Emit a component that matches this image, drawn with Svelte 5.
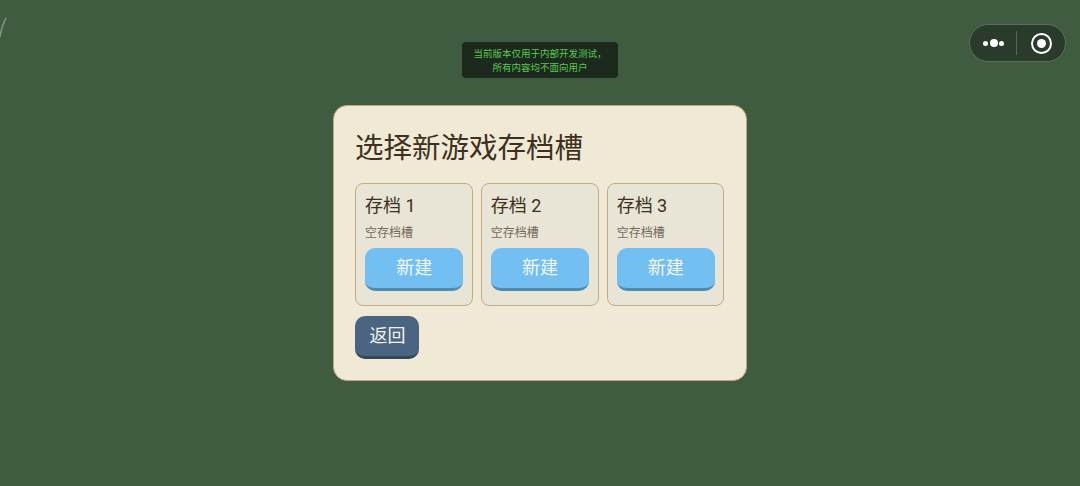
<script>
  const slots = [1, 2, 3];
</script>

<main class="page">
  <svg class="scratch" width="8" height="24" viewBox="0 0 8 24"><path d="M6 1 C4 5 1 10 0 20" /></svg>

  <div class="notice">
    当前版本仅用于内部开发测试，<br />所有内容均不面向用户
  </div>

  <div class="capsule">
    <button class="more" aria-label="更多">
      <i class="dot small"></i><i class="dot"></i><i class="dot small"></i>
    </button>
    <span class="divider"></span>
    <button class="close" aria-label="关闭"><i class="ring"></i></button>
  </div>

  <section class="panel">
    <h1>选择新游戏存档槽</h1>
    <div class="slots">
      {#each slots as n}
        <div class="slot">
          <h2>存档 {n}</h2>
          <p>空存档槽</p>
          <button class="create">新建</button>
        </div>
      {/each}
    </div>
    <button class="back">返回</button>
  </section>
</main>

<style>
  :global(body) {
    margin: 0;
    background: #405c40;
  }
  .page {
    position: relative;
    height: 486px;
    overflow: hidden;
    display: flex;
    align-items: center;
    justify-content: center;
    background: #405c40;
    font-family: Roboto, "Noto Sans CJK SC", sans-serif;
  }
  .scratch {
    position: absolute;
    left: 0;
    top: 17px;
  }
  .scratch path {
    fill: none;
    stroke: #7f937f;
    stroke-width: 1.5;
  }
  .notice {
    position: absolute;
    top: 42px;
    left: 462px;
    width: 156px;
    height: 36px;
    box-sizing: border-box;
    padding-top: 5px;
    border-radius: 4px;
    background: #1b2a1d;
    color: #5cc655;
    font-size: 9.5px;
    line-height: 14px;
    text-align: center;
  }
  .capsule {
    position: absolute;
    top: 24px;
    left: 969px;
    width: 97px;
    height: 38px;
    box-sizing: border-box;
    display: flex;
    align-items: center;
    border: 1px solid #5a7059;
    border-radius: 19px;
    background: #2a3a2b;
  }
  .capsule button {
    border: 0;
    padding: 0;
    background: none;
    display: flex;
    align-items: center;
    justify-content: center;
  }
  .more {
    width: 47px;
    height: 36px;
    gap: 1.5px;
  }
  .dot {
    width: 8px;
    height: 8px;
    border-radius: 50%;
    background: #fff;
  }
  .dot.small {
    width: 5px;
    height: 5px;
  }
  .divider {
    width: 1px;
    height: 24px;
    margin-left: -1px;
    background: #56685a;
  }
  .close {
    flex: 1;
    height: 36px;
    padding-left: 1px;
  }
  .ring {
    width: 21px;
    height: 21px;
    box-sizing: border-box;
    border: 2.5px solid #fff;
    border-radius: 50%;
    display: flex;
    align-items: center;
    justify-content: center;
  }
  .ring::after {
    content: "";
    width: 9px;
    height: 9px;
    border-radius: 50%;
    background: #fff;
  }
  .panel {
    width: 414px;
    height: 276px;
    box-sizing: border-box;
    padding: 22px 21px 0;
    border: 1px solid #bda77c;
    border-radius: 14px;
    background: #efe9d5;
    color: #3d3020;
  }
  h1 {
    margin: 1px 0 0;
    font-size: 28.5px;
    font-weight: 400;
    line-height: 40px;
  }
  .slots {
    display: flex;
    gap: 8px;
    margin-top: 14px;
    width: 369.5px;
  }
  .slot {
    flex: 1;
    height: 123px;
    box-sizing: border-box;
    padding: 9px 8.5px 0 9px;
    border: 1px solid #c2ab82;
    border-radius: 8px;
    background: #e9e5d6;
  }
  h2 {
    margin: 0;
    font-size: 18px;
    font-weight: 400;
    line-height: 26px;
  }
  p {
    margin: 6px 0 0;
    font-size: 12px;
    line-height: 17px;
    color: #75695a;
  }
  .create {
    display: block;
    width: 100%;
    height: 43px;
    margin-top: 6px;
    padding: 0 0 5px;
    border: 0;
    border-bottom: 3px solid #4f8cb0;
    border-radius: 10px;
    background: #73bff2;
    color: #f4f8f6;
    font: inherit;
    font-size: 18px;
  }
  .back {
    display: block;
    width: 64px;
    height: 43px;
    margin-top: 10px;
    padding: 0 0 5px 1px;
    border: 0;
    border-bottom: 3px solid #34465c;
    border-radius: 10px;
    background: #4a6482;
    color: #f3f3ee;
    font: inherit;
    font-size: 18px;
  }
</style>
